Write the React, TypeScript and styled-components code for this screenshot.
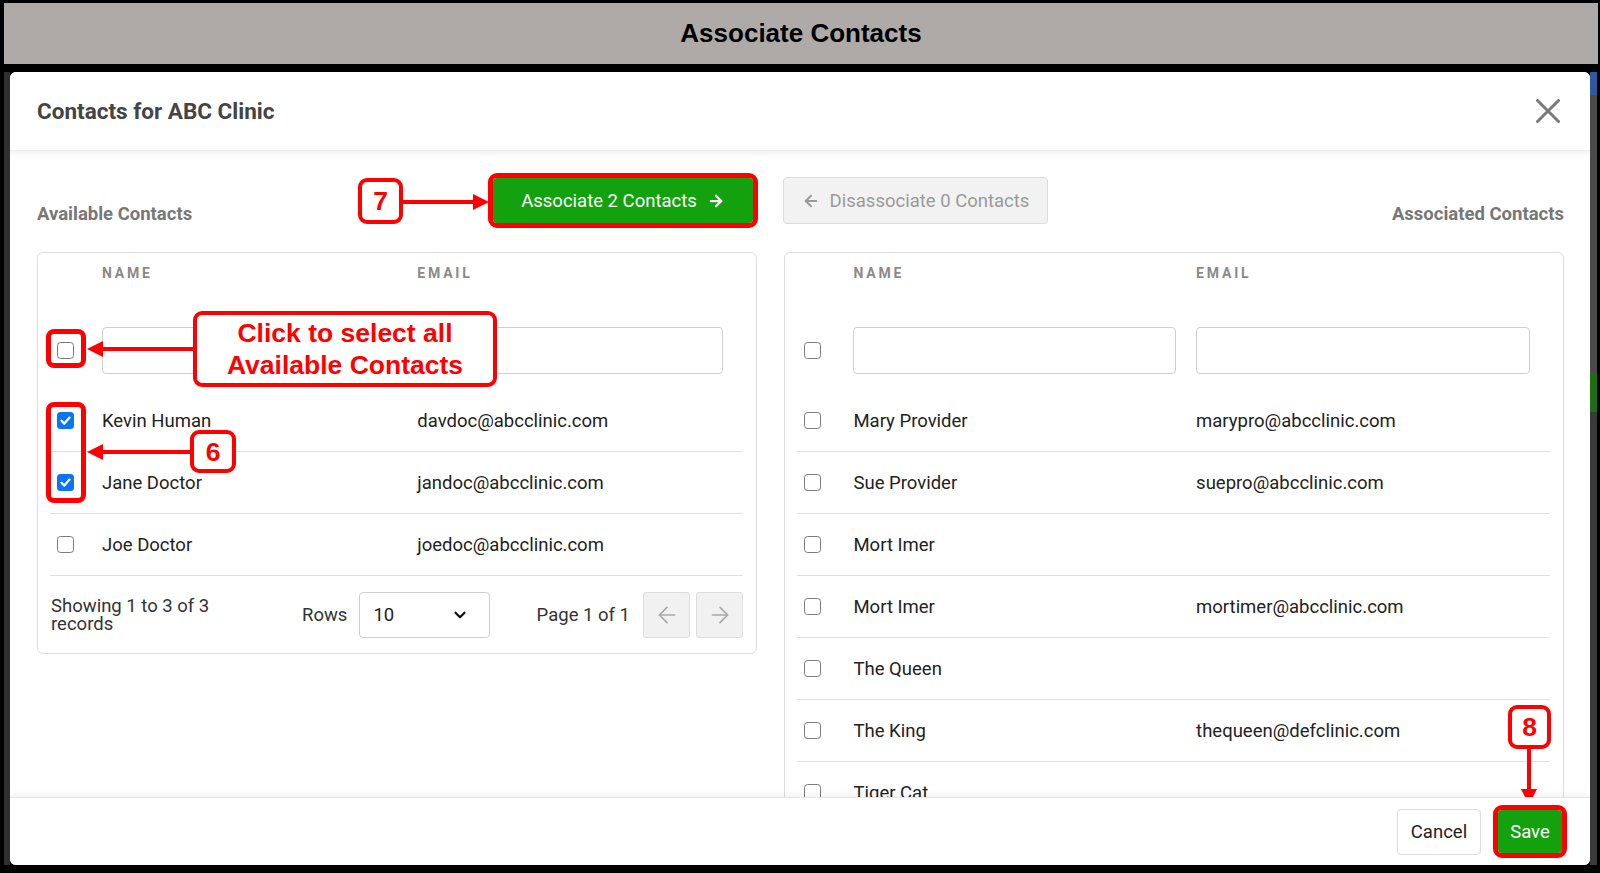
import React from 'react';
import styled, { createGlobalStyle } from 'styled-components';
import { ArrowLeft, ArrowRight, ChevronDown } from 'lucide-react';

const RED = '#ff0000';
const GREEN = '#13a20d';

const GlobalStyle = createGlobalStyle`
  * { box-sizing: border-box; }
  html, body { margin: 0; padding: 0; background: #000; }
  body { font-family: Roboto, "Liberation Sans", Arial, sans-serif; }
`;

const Frame = styled.div`
  position: relative;
  width: 1600px;
  height: 873px;
  overflow: hidden;
  background: #000;
  padding: 3px 2px 0 4px;
  display: flex;
  flex-direction: column;
`;

const TitleBar = styled.div`
  height: 61px;
  flex: none;
  background: #aeaaa8;
  display: flex;
  align-items: center;
  justify-content: center;
  font-family: "Liberation Sans", Arial, sans-serif;
  font-weight: 700;
  font-size: 26px;
  color: #000;
`;

const Stage = styled.div`
  margin-top: 8px;
  height: 793px;
  flex: none;
  display: flex;
  padding-right: 1px;
`;

const LeftStrip = styled.div`
  width: 6px;
  flex: none;
  background: #2f2f2f;
`;

const RightStrip = styled.div`
  width: 7px;
  flex: none;
  background: linear-gradient(
    to bottom,
    #2d5aa0 0,
    #2d5aa0 23px,
    #4a4a4a 23px,
    #4a4a4a 301px,
    #1e6e12 301px,
    #1e6e12 340px,
    #3a3a3a 340px
  );
`;

const Modal = styled.div`
  flex: none;
  width: 1580px;
  height: 100%;
  background: #fff;
  border-radius: 6px;
  display: flex;
  flex-direction: column;
  overflow: hidden;
`;

const ModalHeader = styled.header`
  flex: none;
  height: 79px;
  display: flex;
  align-items: center;
  justify-content: space-between;
  padding: 0 30px 0 27px;
  border-bottom: 1px solid #ececec;
  box-shadow: 0 3px 6px rgba(0, 0, 0, 0.06);
  position: relative;
  z-index: 1;
  background: #fff;
`;

const ModalTitle = styled.h2`
  margin: 0;
  font-size: 22.5px;
  font-weight: 700;
  color: #444;
`;

const CloseButton = styled.button`
  width: 24px;
  height: 24px;
  padding: 0;
  border: 0;
  background: none;
  display: flex;
`;

const ModalBody = styled.div`
  flex: 1;
  min-height: 0;
  overflow: hidden;
  padding: 26px 26px 0 27px;
  display: grid;
  grid-template-columns: 720px 1fr;
  column-gap: 27px;
  align-items: start;
`;

const Column = styled.section`
  display: flex;
  flex-direction: column;
`;

const ColumnHead = styled.div`
  height: 47px;
  display: flex;
  align-items: center;
  justify-content: space-between;
`;

const SectionLabel = styled.div`
  align-self: flex-end;
  font-size: 18.5px;
  font-weight: 700;
  line-height: 20px;
  color: #777;
`;

const PrimaryButton = styled.button`
  position: relative;
  width: 260px;
  height: 45px;
  margin-right: 4px;
  border: 0;
  border-radius: 4px;
  background: ${GREEN};
  color: #fff;
  font-family: inherit;
  font-size: 18.5px;
  display: flex;
  align-items: center;
  justify-content: center;
  gap: 10px;
`;

const DisabledButton = styled.button`
  width: 265px;
  height: 47px;
  margin-left: -1px;
  border: 1px solid #dcdcdc;
  border-radius: 4px;
  background: #f2f2f2;
  color: #9a9a9a;
  font-family: inherit;
  font-size: 18.5px;
  display: flex;
  align-items: center;
  justify-content: center;
  gap: 10px;
`;

const Card = styled.div`
  margin-top: 28px;
  border: 1px solid #dcdcdc;
  border-radius: 6px;
  padding: 0 13px 0 12px;
`;

const Row = styled.div`
  display: grid;
  grid-template-columns: 7.5% 45.5% 47%;
  align-items: center;
`;

const HeadRow = styled(Row)`
  height: 42px;
  align-items: start;
  padding-top: 13px;
`;

const HeadCell = styled.div`
  font-size: 14px;
  font-weight: 700;
  letter-spacing: 2.8px;
  line-height: 15px;
  color: #8a8a8a;
  text-transform: uppercase;
`;

const FilterRow = styled(Row)`
  padding: 32px 0 16px;
`;

const FilterInput = styled.input`
  width: calc(100% - 20px);
  height: 47px;
  border: 1px solid #cfcfcf;
  border-radius: 4px;
  font-family: inherit;
  font-size: 18px;
  padding: 0 12px;
`;

const DataRow = styled(Row)`
  height: 62px;
  border-bottom: 1px solid #e0e0e0;
  font-size: 18.5px;
  color: #222;
`;

const CheckCell = styled.div`
  padding-left: 7px;
  display: flex;
`;

const Box = styled.span<{ $checked?: boolean }>`
  width: 17px;
  height: 17px;
  border-radius: 3.5px;
  border: ${p => (p.$checked ? '0' : '1.5px solid #7a7a7a')};
  background: ${p => (p.$checked ? '#0b74f3' : '#fff')};
  display: flex;
  align-items: center;
  justify-content: center;
`;

const TableFooter = styled.div`
  display: flex;
  align-items: center;
  padding: 16px 0 15px 1px;
  font-size: 18.5px;
  color: #333;
`;

const RecordInfo = styled.div`
  width: 185px;
  margin-right: 66px;
  line-height: 18px;
`;

const RowsLabel = styled.span`
  margin-right: 12px;
`;

const SelectBox = styled.div`
  width: 131px;
  height: 46px;
  border: 1px solid #cfcfcf;
  border-radius: 4px;
  padding: 0 20px 0 13px;
  display: flex;
  align-items: center;
  justify-content: space-between;
  color: #222;
`;

const Pager = styled.div`
  margin-left: auto;
  display: flex;
  align-items: center;
  gap: 6px;
`;

const PageText = styled.span`
  margin-right: 7px;
`;

const PagerButton = styled.button`
  width: 47px;
  height: 46px;
  border: 1px solid #dddddd;
  border-radius: 3px;
  background: #f1f1f1;
  display: flex;
  align-items: center;
  justify-content: center;
  padding: 0;
`;

const ModalFooter = styled.footer`
  flex: none;
  height: 68px;
  display: flex;
  align-items: center;
  justify-content: flex-end;
  gap: 17px;
  padding: 0 28px 0 0;
  border-top: 1px solid #e6e6e6;
  box-shadow: 0 -3px 6px rgba(0, 0, 0, 0.05);
  position: relative;
  z-index: 1;
  background: #fff;
`;

const CancelButton = styled.button`
  width: 84px;
  height: 46px;
  border: 1px solid #dcdcdc;
  border-radius: 4px;
  background: #fff;
  color: #222;
  font-family: inherit;
  font-size: 18.5px;
`;

const SaveButton = styled.button`
  position: relative;
  width: 64px;
  height: 43px;
  border: 0;
  border-radius: 4px;
  background: ${GREEN};
  color: #fff;
  font-family: inherit;
  font-size: 18.5px;
`;

/* ---------- annotation overlay ---------- */

const Ring = styled.span`
  position: absolute;
  inset: -5px;
  border: 5px solid ${RED};
  border-radius: 9px;
  pointer-events: none;
`;

const Marker = styled.div<{ $x: number; $y: number; $w: number; $h: number }>`
  position: absolute;
  left: ${p => p.$x}px;
  top: ${p => p.$y}px;
  width: ${p => p.$w}px;
  height: ${p => p.$h}px;
  border: 5px solid ${RED};
  border-radius: 8px;
  pointer-events: none;
`;

const Callout = styled.div<{ $x: number; $y: number; $w: number; $h: number }>`
  position: absolute;
  left: ${p => p.$x}px;
  top: ${p => p.$y}px;
  width: ${p => p.$w}px;
  height: ${p => p.$h}px;
  background: #fff;
  border: 4px solid ${RED};
  border-radius: 9px;
  display: flex;
  align-items: center;
  justify-content: center;
  text-align: center;
  font-family: "Liberation Sans", Arial, sans-serif;
  font-weight: 700;
  font-size: 26.5px;
  line-height: 32px;
  color: ${RED};
`;

const ArrowLayer = styled.svg`
  position: absolute;
  left: 0;
  top: 0;
  width: 1600px;
  height: 873px;
  pointer-events: none;
`;

type Contact = { name: string; email: string; checked?: boolean };

const available: Contact[] = [
  { name: 'Kevin Human', email: 'davdoc@abcclinic.com', checked: true },
  { name: 'Jane Doctor', email: 'jandoc@abcclinic.com', checked: true },
  { name: 'Joe Doctor', email: 'joedoc@abcclinic.com' },
];

const associated: Contact[] = [
  { name: 'Mary Provider', email: 'marypro@abcclinic.com' },
  { name: 'Sue Provider', email: 'suepro@abcclinic.com' },
  { name: 'Mort Imer', email: '' },
  { name: 'Mort Imer', email: 'mortimer@abcclinic.com' },
  { name: 'The Queen', email: '' },
  { name: 'The King', email: 'thequeen@defclinic.com' },
  { name: 'Tiger Cat', email: '' },
];

const CheckBox = ({ checked }: { checked?: boolean }) => (
  <Box $checked={checked}>
    {checked && (
      <svg width="13" height="13" viewBox="0 0 13 13">
        <path d="M2.5 6.8 L5.3 9.6 L10.6 3.6" fill="none" stroke="#fff" strokeWidth="2.3" strokeLinecap="round" strokeLinejoin="round" />
      </svg>
    )}
  </Box>
);

const ContactTable = ({ rows }: { rows: Contact[] }) => (
  <>
    <HeadRow>
      <div />
      <HeadCell>Name</HeadCell>
      <HeadCell>Email</HeadCell>
    </HeadRow>
    <FilterRow>
      <CheckCell>
        <CheckBox />
      </CheckCell>
      <FilterInput />
      <FilterInput />
    </FilterRow>
    {rows.map((r, i) => (
      <DataRow key={i}>
        <CheckCell>
          <CheckBox checked={r.checked} />
        </CheckCell>
        <div>{r.name}</div>
        <div>{r.email}</div>
      </DataRow>
    ))}
  </>
);

export default function App() {
  return (
    <>
      <GlobalStyle />
      <Frame>
        <TitleBar>Associate Contacts</TitleBar>
        <Stage>
          <LeftStrip />
          <Modal>
            <ModalHeader>
              <ModalTitle>Contacts for ABC Clinic</ModalTitle>
              <CloseButton aria-label="Close">
                <svg width="24" height="24" viewBox="0 0 24 24">
                  <path d="M1.5 1.5 L22.5 22.5 M22.5 1.5 L1.5 22.5" stroke="#7a7a7a" strokeWidth="3" strokeLinecap="round" />
                </svg>
              </CloseButton>
            </ModalHeader>
            <ModalBody>
              <Column>
                <ColumnHead>
                  <SectionLabel>Available Contacts</SectionLabel>
                  <PrimaryButton>
                    Associate 2 Contacts
                    <ArrowRight size={18} strokeWidth={3} />
                    <Ring />
                  </PrimaryButton>
                </ColumnHead>
                <Card>
                  <ContactTable rows={available} />
                  <TableFooter>
                    <RecordInfo>Showing 1 to 3 of 3 records</RecordInfo>
                    <RowsLabel>Rows</RowsLabel>
                    <SelectBox>
                      <span>10</span>
                      <ChevronDown size={18} strokeWidth={3} color="#111" />
                    </SelectBox>
                    <Pager>
                      <PageText>Page 1 of 1</PageText>
                      <PagerButton aria-label="Previous">
                        <ArrowLeft size={26} strokeWidth={1.5} color="#a8a8a8" />
                      </PagerButton>
                      <PagerButton aria-label="Next">
                        <ArrowRight size={26} strokeWidth={1.5} color="#a8a8a8" />
                      </PagerButton>
                    </Pager>
                  </TableFooter>
                </Card>
              </Column>
              <Column>
                <ColumnHead>
                  <DisabledButton>
                    <ArrowLeft size={18} strokeWidth={2.6} />
                    Disassociate 0 Contacts
                  </DisabledButton>
                  <SectionLabel>Associated Contacts</SectionLabel>
                </ColumnHead>
                <Card>
                  <ContactTable rows={associated} />
                </Card>
              </Column>
            </ModalBody>
            <ModalFooter>
              <CancelButton>Cancel</CancelButton>
              <SaveButton>
                Save
                <Ring />
              </SaveButton>
            </ModalFooter>
          </Modal>
          <RightStrip />
        </Stage>

        <Marker $x={46} $y={329} $w={40} $h={39} />
        <Marker $x={46} $y={402} $w={40} $h={101} />
        <Callout $x={358} $y={178} $w={45} $h={46}>7</Callout>
        <Callout $x={193} $y={311} $w={304} $h={76}>
          Click to select all
          <br />
          Available Contacts
        </Callout>
        <Callout $x={190} $y={430} $w={46} $h={43}>6</Callout>
        <Callout $x={1508} $y={705} $w={43} $h={44}>8</Callout>

        <ArrowLayer viewBox="0 0 1600 873">
          <g fill={RED} stroke={RED}>
            <line x1="403" y1="202" x2="476" y2="202" strokeWidth="4" />
            <polygon points="473,194 489,202 473,210" stroke="none" />
            <line x1="193" y1="349" x2="100" y2="349" strokeWidth="4" />
            <polygon points="103,341 87,349 103,357" stroke="none" />
            <line x1="190" y1="452" x2="100" y2="452" strokeWidth="4" />
            <polygon points="103,444 87,452 103,460" stroke="none" />
            <line x1="1529" y1="749" x2="1529" y2="792" strokeWidth="4" />
            <polygon points="1521,789 1529,805 1537,789" stroke="none" />
          </g>
        </ArrowLayer>
      </Frame>
    </>
  );
}
